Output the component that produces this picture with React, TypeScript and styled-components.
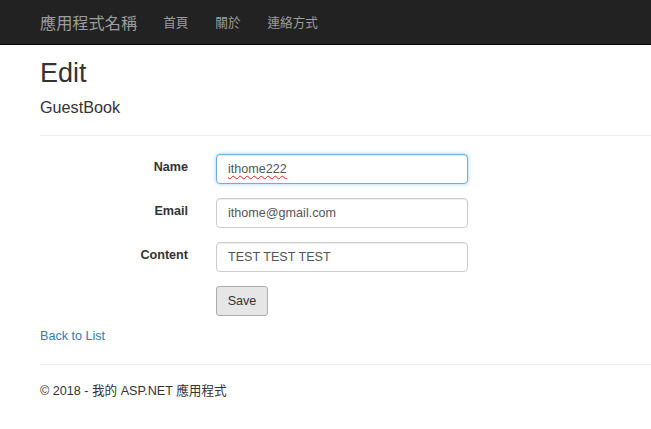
import styled, { createGlobalStyle } from 'styled-components';

const GlobalStyle = createGlobalStyle`
  html, body {
    margin: 0;
    padding: 0;
    background: #fff;
  }
  body {
    font-family: "Liberation Sans", Arial, "Noto Sans CJK TC", sans-serif;
    font-size: 12.6px;
    line-height: 18px;
    color: #333;
  }
  * {
    box-sizing: border-box;
  }
`;

const FIELDS = [
  { label: 'Name', value: 'ithome222', misspelled: true, focused: true },
  { label: 'Email', value: 'ithome@gmail.com', misspelled: false, focused: false },
  { label: 'Content', value: 'TEST TEST TEST', misspelled: false, focused: false },
];

const App = () => {
  return (
    <>
      <GlobalStyle />
      <Navbar>
        <Brand href="#">應用程式名稱</Brand>
        <NavList>
          <NavLink href="#">首頁</NavLink>
          <NavLink href="#">關於</NavLink>
          <NavLink href="#">連絡方式</NavLink>
        </NavList>
      </Navbar>
      <Container>
        <Title>Edit</Title>
        <SubTitle>GuestBook</SubTitle>
        <Rule />
        <Form>
          {FIELDS.map(({ label, value, misspelled, focused }) => (
            <FormRow key={label}>
              <Label>{label}</Label>
              <InputWrap>
                <Input defaultValue={value} $focused={focused} spellCheck={false} />
                {misspelled && <Squiggle aria-hidden>{value}</Squiggle>}
              </InputWrap>
            </FormRow>
          ))}
          <FormRow>
            <Label />
            <Button type="button">Save</Button>
          </FormRow>
        </Form>
        <BackLink href="#">Back to List</BackLink>
        <FooterRule />
        <Footer>© 2018 - 我的 ASP.NET 應用程式</Footer>
      </Container>
    </>
  );
};

export default App;

const Navbar = styled.nav`
  height: 45px;
  background: #222;
  border-bottom: 1px solid #080808;
  display: flex;
  align-items: center;
  padding-left: 40px;
  font-family: "Noto Sans CJK TC", sans-serif;
`;
const Brand = styled.a`
  font-size: 16.2px;
  color: #9d9d9d;
  text-decoration: none;
  margin-right: 26px;
`;
const NavList = styled.div`
  display: flex;
  gap: 27px;
`;
const NavLink = styled.a`
  font-size: 12.6px;
  color: #9d9d9d;
  text-decoration: none;
`;
const Container = styled.div`
  padding-left: 40px;
`;
const Title = styled.h2`
  font-size: 27px;
  font-weight: 500;
  line-height: 1.1;
  margin: 14px 0 0;
`;
const SubTitle = styled.h4`
  font-size: 16.2px;
  font-weight: 500;
  line-height: 1.1;
  margin: 10px 0 0;
`;
const Rule = styled.hr`
  border: 0;
  border-top: 1px solid #eee;
  margin: 18px 0 18px;
`;
const Form = styled.div`
  display: flex;
  flex-direction: column;
  gap: 14px;
`;
const FormRow = styled.div`
  display: flex;
  align-items: flex-start;
`;
const Label = styled.label`
  width: 148px;
  margin-right: 28px;
  text-align: right;
  font-weight: bold;
  padding-top: 4px;
`;
const InputWrap = styled.div`
  position: relative;
`;
const Input = styled.input<{ $focused: boolean }>`
  display: block;
  width: 252px;
  height: 30px;
  padding: 5px 11px;
  font-family: inherit;
  font-size: 12.6px;
  color: #555;
  border-radius: 4px;
  border: 1px solid ${({ $focused }) => ($focused ? '#66afe9' : '#ccc')};
  box-shadow: ${({ $focused }) =>
    $focused
      ? 'inset 0 1px 1px rgba(0,0,0,.075), 0 0 4px rgba(102,175,233,.6)'
      : 'inset 0 1px 1px rgba(0,0,0,.075)'};
  outline: none;
`;
const Squiggle = styled.span`
  position: absolute;
  left: 12px;
  top: 6px;
  font-size: 12.6px;
  line-height: 18px;
  color: transparent;
  pointer-events: none;
  text-decoration: underline wavy #e02020;
  text-decoration-thickness: 1px;
  text-underline-offset: 2px;
`;
const Button = styled.button`
  width: 52px;
  height: 30px;
  font-family: inherit;
  font-size: 12.6px;
  color: #333;
  background: #e6e6e6;
  border: 1px solid #adadad;
  border-radius: 3px;
  padding: 0;
`;
const BackLink = styled.a`
  display: block;
  margin-top: 11px;
  color: #337ab7;
  text-decoration: none;
`;
const FooterRule = styled.hr`
  border: 0;
  border-top: 1px solid #eee;
  margin: 19px 0 17px;
`;
const Footer = styled.p`
  margin: 0;
`;
